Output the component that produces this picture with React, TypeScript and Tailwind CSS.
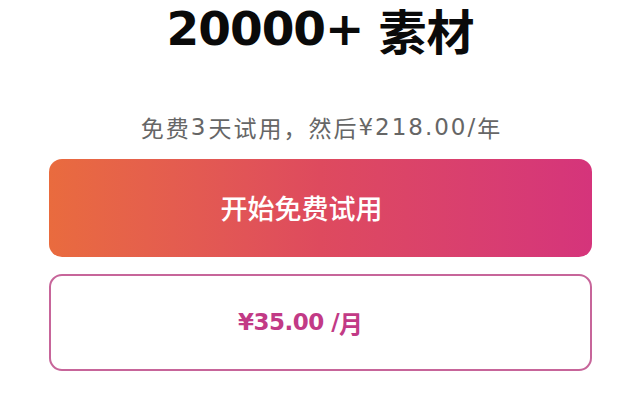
import React from "react";

export default function App() {
  return (
    <div className="w-[641px] h-[408px] bg-white flex flex-col items-center overflow-hidden font-['DejaVu_Sans','Noto_Sans_CJK_SC',sans-serif]">
      <h1 className="mt-[-1px] flex items-center justify-center text-[47px] leading-[60px] font-bold text-[#0a0a0a]">
        <span className="tracking-[-1px]">20000+</span>
        <span className="ml-[15px] text-[48px] leading-[60px] font-['Noto_Sans_CJK_SC',sans-serif]">素材</span>
      </h1>
      <p className="mt-[52px] flex items-center text-[23px] leading-[32px] text-[#666666]">
        <span className="tracking-[2px] font-['Noto_Sans_CJK_SC',sans-serif]">免费</span>
        <span className="tracking-[3px]">3</span>
        <span className="tracking-[2px] font-['Noto_Sans_CJK_SC',sans-serif]">天试用，然后</span>
        <span className="tracking-[2px]">¥218.00/</span>
        <span className="font-['Noto_Sans_CJK_SC',sans-serif]">年</span>
      </p>
      <div className="mt-[16px] w-[543px] flex flex-col gap-[17px]">
        <button className="h-[98px] w-full rounded-[13px] bg-gradient-to-r from-[#e96b3e] via-[#de4a5e] to-[#d5347b] flex items-center justify-center pr-[38px]">
          <span className="text-white text-[27px] font-medium font-['Noto_Sans_CJK_SC',sans-serif]">开始免费试用</span>
        </button>
        <button className="h-[97px] w-full rounded-[13px] border-2 border-[#c7659a] bg-white flex items-center justify-center pr-[40px]">
          <span className="text-[#c23a86] text-[23px] font-bold tracking-[-0.5px]">¥35.00 /</span>
          <span className="text-[#c23a86] text-[24px] font-bold font-['Noto_Sans_CJK_SC',sans-serif]">月</span>
        </button>
      </div>
    </div>
  );
}
